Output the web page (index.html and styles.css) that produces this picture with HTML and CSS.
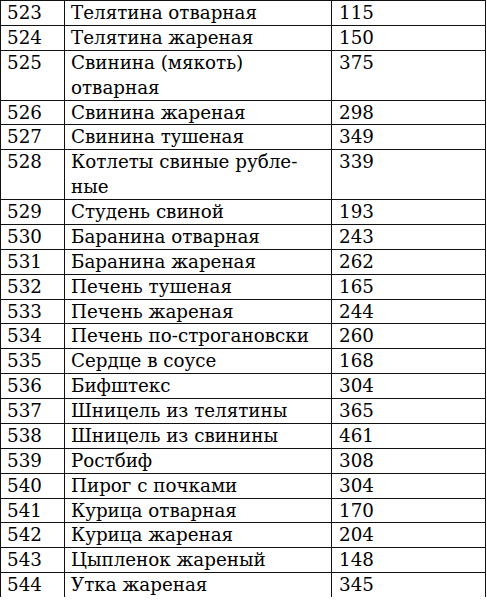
FILE: index.html
```html
<!DOCTYPE html>
<html lang="ru">
<head>
<meta charset="utf-8">
<link rel="stylesheet" href="styles.css">
</head>
<body>
<div class="table">
  <div class="c n">523</div><div class="c t">Телятина отварная</div><div class="c v">115</div>
  <div class="c n">524</div><div class="c t">Телятина жареная</div><div class="c v">150</div>
  <div class="c n">525</div><div class="c t">Свинина (мякоть)<br>отварная</div><div class="c v">375</div>
  <div class="c n">526</div><div class="c t">Свинина жареная</div><div class="c v">298</div>
  <div class="c n">527</div><div class="c t">Свинина тушеная</div><div class="c v">349</div>
  <div class="c n">528</div><div class="c t">Котлеты свиные рубле-<br>ные</div><div class="c v">339</div>
  <div class="c n">529</div><div class="c t">Студень свиной</div><div class="c v">193</div>
  <div class="c n">530</div><div class="c t">Баранина отварная</div><div class="c v">243</div>
  <div class="c n">531</div><div class="c t">Баранина жареная</div><div class="c v">262</div>
  <div class="c n">532</div><div class="c t">Печень тушеная</div><div class="c v">165</div>
  <div class="c n">533</div><div class="c t">Печень жареная</div><div class="c v">244</div>
  <div class="c n">534</div><div class="c t">Печень по-строгановски</div><div class="c v">260</div>
  <div class="c n">535</div><div class="c t">Сердце в соусе</div><div class="c v">168</div>
  <div class="c n">536</div><div class="c t">Бифштекс</div><div class="c v">304</div>
  <div class="c n">537</div><div class="c t">Шницель из телятины</div><div class="c v">365</div>
  <div class="c n">538</div><div class="c t">Шницель из свинины</div><div class="c v">461</div>
  <div class="c n">539</div><div class="c t">Ростбиф</div><div class="c v">308</div>
  <div class="c n">540</div><div class="c t">Пирог с почками</div><div class="c v">304</div>
  <div class="c n">541</div><div class="c t">Курица отварная</div><div class="c v">170</div>
  <div class="c n">542</div><div class="c t">Курица жареная</div><div class="c v">204</div>
  <div class="c n">543</div><div class="c t">Цыпленок жареный</div><div class="c v">148</div>
  <div class="c n last">544</div><div class="c t last">Утка жареная</div><div class="c v last">345</div>
</div>
</body>
</html>
```
FILE: styles.css
```css
html, body {
  margin: 0;
  padding: 0;
  background: #fff;
}
.table {
  display: grid;
  grid-template-columns: 64px 267px 155px;
  width: 486px;
  font-family: "DejaVu Serif", "Liberation Serif", serif;
  font-size: 18.3px;
  line-height: 24.875px;
  color: #000;
}
.c {
  padding: 1px 7px 0 7px;
  margin-bottom: -1px;
  box-shadow: inset 1px 1px 0 #111;
  white-space: nowrap;
}
.v {
  box-shadow: inset 1px 1px 0 #111, inset -1px 0 0 #111;
  padding-left: 8px;
}
.c.last {
  box-shadow: inset 1px 1px 0 #111, inset 0 -1px 0 #111;
}
.v.last {
  box-shadow: inset 1px 1px 0 #111, inset -1px -1px 0 #111;
}
```
